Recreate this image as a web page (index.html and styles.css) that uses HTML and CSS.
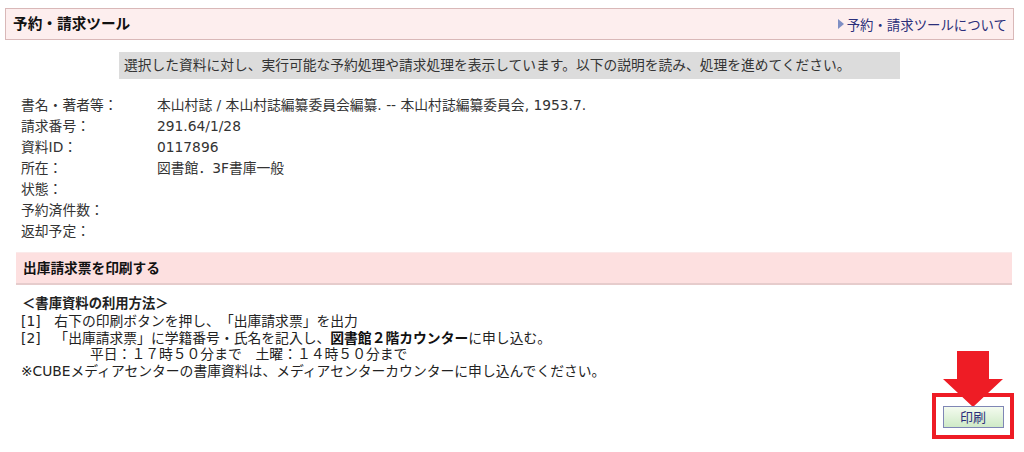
FILE: index.html
```html
<!DOCTYPE html>
<html lang="ja">
<head>
<meta charset="utf-8">
<link rel="stylesheet" href="styles.css">
</head>
<body>
<div class="page">
  <div class="header">
    <h1 class="title">予約・請求ツール</h1>
    <a class="help-link" href="#"><span class="tri"></span>予約・請求ツールについて</a>
  </div>
  <div class="notice-wrap">
    <div class="notice">選択した資料に対し、実行可能な予約処理や請求処理を表示しています。以下の説明を読み、処理を進めてください。</div>
  </div>
  <div class="info">
    <div class="row"><div class="label">書名・著者等：</div><div class="value">本山村誌 / 本山村誌編纂委員会編纂. -- 本山村誌編纂委員会, 1953.7.</div></div>
    <div class="row"><div class="label">請求番号：</div><div class="value">291.64/1/28</div></div>
    <div class="row"><div class="label">資料ID：</div><div class="value">0117896</div></div>
    <div class="row"><div class="label">所在：</div><div class="value">図書館．3F書庫一般</div></div>
    <div class="row"><div class="label">状態：</div><div class="value"></div></div>
    <div class="row"><div class="label">予約済件数：</div><div class="value"></div></div>
    <div class="row"><div class="label">返却予定：</div><div class="value"></div></div>
  </div>
  <div class="section-bar">出庫請求票を印刷する</div>
  <div class="method">
    <div class="method-title">＜書庫資料の利用方法＞</div>
    <div>[1]　右下の印刷ボタンを押し、「出庫請求票」を出力</div>
    <div>[2]　「出庫請求票」に学籍番号・氏名を記入し、<b>図書館２階カウンター</b>に申し込む。</div>
    <div class="hours">平日：１７時５０分まで　土曜：１４時５０分まで</div>
    <div>※CUBEメディアセンターの書庫資料は、メディアセンターカウンターに申し込んでください。</div>
  </div>
  <div class="actions">
    <div class="highlight">
      <svg class="arrow" width="60" height="56" viewBox="0 0 60 56"><polygon points="14,0 46,0 46,28 60,28 30,56 0,28 14,28" fill="#ee1c25"/></svg>
      <button class="print-btn" type="button">印刷</button>
    </div>
  </div>
</div>
</body>
</html>
```
FILE: styles.css
```css
html, body {
  margin: 0;
  padding: 0;
  background: #fff;
}
body {
  font-family: "DejaVu Sans", "Noto Sans CJK JP", sans-serif;
  color: #222;
  font-size: 13.8px;
  text-spacing-trim: space-all;
}
.page {
  padding: 8px 10px 0 5px;
}
.header {
  display: flex;
  align-items: center;
  justify-content: space-between;
  height: 30px;
  border: 1px solid #d9b8b8;
  background: #fdeeee;
  padding: 0 6px 0 7px;
}
.title {
  margin: 0;
  font-size: 14.67px;
  font-weight: bold;
  color: #111;
  line-height: 1;
}
.help-link {
  display: flex;
  align-items: center;
  gap: 3px;
  color: #2b2f7a;
  text-decoration: none;
  font-size: 13.4px;
}
.tri {
  width: 0;
  height: 0;
  border-left: 6px solid #7f8fc4;
  border-top: 5px solid transparent;
  border-bottom: 5px solid transparent;
}
.notice-wrap {
  display: flex;
  justify-content: center;
  margin-top: 12px;
}
.notice {
  box-sizing: border-box;
  width: 781px;
  background: #dcdcdc;
  padding: 0 0 0 5px;
  height: 27px;
  line-height: 27px;
  font-size: 13.75px;
  color: #333;
  white-space: nowrap;
}
.info {
  margin-top: 16px;
  padding-left: 16px;
}
.row {
  display: flex;
  height: 21px;
  line-height: 21px;
}
.label {
  width: 136px;
  color: #333;
}
.value {
  color: #333;
}
.section-bar {
  margin: 10px 2px 0 11px;
  height: 30px;
  line-height: 31px;
  background: #fde0e0;
  border-top: 1px solid #fbeaea;
  border-bottom: 2px solid #e6cccc;
  padding-left: 7px;
  font-weight: bold;
  font-size: 13.7px;
  color: #111;
}
.method {
  margin-top: 11px;
  padding-left: 16px;
  line-height: 16.8px;
  color: #222;
}
.method-title {
  font-weight: bold;
  padding-left: 1px;
  font-size: 13.33px;
}
.method b {
  color: #111;
}
.hours {
  padding-left: 69px;
}
.actions {
  display: flex;
  justify-content: flex-end;
  margin-top: 13px;
}
.highlight {
  position: relative;
  width: 74px;
  height: 38px;
  border: 4px solid #ee1c25;
  display: flex;
  align-items: center;
  justify-content: center;
}
.arrow {
  position: absolute;
  left: 7px;
  top: -46px;
}
.print-btn {
  position: relative;
  width: 61px;
  height: 22px;
  padding: 0;
  margin-top: 2px;
  border: 1px solid #7f86b5;
  background: linear-gradient(#f4fbef, #cfeac7);
  color: #2b2f7a;
  font-family: "Noto Sans CJK JP", sans-serif;
  font-size: 13px;
  line-height: 20px;
}
```
